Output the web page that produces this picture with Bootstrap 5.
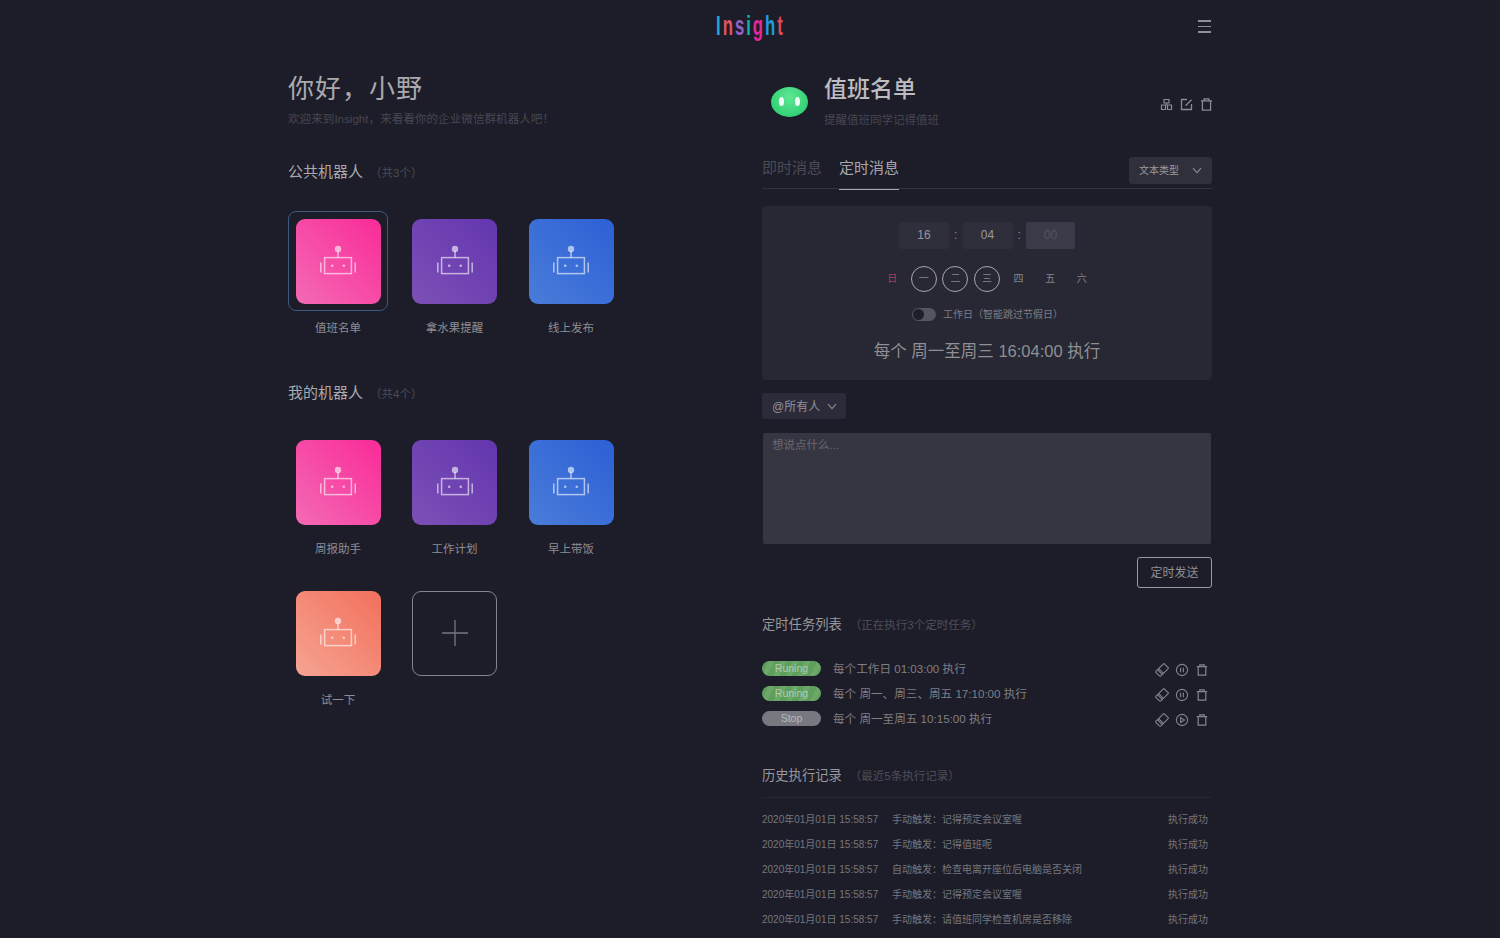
<!DOCTYPE html>
<html lang="zh-CN">
<head>
  <meta charset="UTF-8" />
  <meta name="viewport" content="width=device-width, initial-scale=1.0"/>
  <title>Insight</title>
  <link href="https://cdn.jsdelivr.net/npm/bootstrap@5.3.0/dist/css/bootstrap.min.css" rel="stylesheet">
  <style>
    html, body { height: 938px; overflow: hidden; }
    body {
      background: #1d1d29;
      color: #a6a6ab;
      font-family: "Liberation Sans", "Noto Sans CJK SC", sans-serif;
      font-size: 12px;
    }
    .wrap { width: 924px; margin: 0 auto; position: relative; }
    .topbar { height: 54px; }
    .logo { display: inline-block; font-size: 27px; line-height: 52px; letter-spacing: 3.2px; transform: scaleX(.62); font-weight: 700; }
    .menu-btn { position: absolute; right: 1px; top: 20px; width: 13px; }
    .menu-btn i { display: block; height: 1.5px; background: #8f8f94; margin-bottom: 4.2px; }
    .left-col { width: 474px; }
    .right-col { width: 450px; }
    .hello { font-size: 26px; line-height: 36px; letter-spacing: 1px; margin-top: 17px; color: #a9a9ae; }
    .sub-hello { font-size: 11.6px; line-height: 16px; margin-top: 4px; color: #474752; }
    .sec-title { font-size: 15px; line-height: 20px; color: #a9a9ae; }
    .sec-note { font-size: 11.5px; color: #4c4c57; margin-left: 7px; }
    .sec-one { margin-top: 35px; }
    .sec-two { margin-top: 21px; }
    .bot-grid { display: grid; grid-template-columns: repeat(3, 100px); column-gap: 16.5px; margin-top: 28px; }
    .bot-item { text-align: center; height: 151px; }
    .bot-face { width: 100px; height: 100px; padding: 7.5px; border: 1px solid transparent; border-radius: 8px; }
    .bot-face.picked { border-color: #3a5a80; }
    .bot-tile { width: 85px; height: 85px; margin-top: -.5px; margin-left: -1px; border-radius: 9px; display: flex; align-items: center; justify-content: center; }
    .bot-tile svg { width: 36px; height: 32px; margin-top: -1px; color: rgba(255,255,255,.6); }
    .bot-pink { background: linear-gradient(45deg, #f46ab4, #f92b98); }
    .bot-purple { background: linear-gradient(45deg, #7d4fb6, #6336af); }
    .bot-blue { background: linear-gradient(45deg, #4a7cd9, #2c60d5); }
    .bot-orange { background: linear-gradient(45deg, #f6a392, #f2705c); }
    .bot-add { border: 1px solid #85858c; background: transparent; }
    .bot-add svg { width: 26px; height: 26px; color: #77777d; }
    .bot-name { font-size: 11.5px; line-height: 17px; margin-top: 9px; color: #8d8d93; }

    .bot-head { height: 70px; margin-top: 13px; }
    .blob { width: 37px; height: 30px; margin: 0 16px 0 9px; border-radius: 50% / 50%; background: radial-gradient(circle at 50% 35%, #5fe793, #30d175 75%, #2cb96a); position: relative; flex: none; }
    .blob::before, .blob::after { content: ""; position: absolute; top: 10px; width: 5px; height: 9px; border-radius: 50%; background: #f0fff5; }
    .blob::before { left: 8px; }
    .blob::after { right: 8px; }
    .bot-title { font-size: 23px; line-height: 34px; margin-top: 5px; color: #bdbdc1; font-weight: 500; }
    .bot-desc { font-size: 11.5px; line-height: 16px; color: #464651; margin-top: 6px; }
    .head-icons { gap: 5px; margin-top: 5px; margin-right: -2px; }
    .head-icons svg { width: 15px; height: 15px; color: #8b8b90; }
    .tab-row { height: 49px; margin-top: 3px; border-bottom: 1px solid #33333f; }
    .tab-item { font-size: 15px; line-height: 20px; padding-top: 18px; height: 50px; width: 60px; color: #4b4b55; }
    .tab-item.on { color: #a8a8ac; border-bottom: 1.5px solid #a8a8ac; margin-left: 17px; }
    .type-btn { width: 83px; height: 27px; background: #30303d; border-radius: 3px; color: #9a9a9f; font-size: 10px; padding: 0 10px; margin-top: 17px; margin-left: auto; }
    .type-btn svg, .at-btn svg { width: 10px; height: 7px; color: #8b8b90; }
    .plan-panel { height: 174px; margin-top: 17px; background: #272833; border-radius: 4px; padding-top: 16px; text-align: center; }
    .time-row { height: 27px; gap: 0; justify-content: center; }
    .time-box { width: 50px; height: 27px; line-height: 27px; background: #2f2f3c; border-radius: 2px; font-size: 12px; color: #97979c; }
    .time-box.off { background: #3a3a48; color: #55555f; width: 49px; }
    .time-sep { width: 13.5px; line-height: 27px; color: #8f8f95; }
    .day-row { margin-top: 17px; height: 26px; justify-content: center; padding-left: 0; }
    .day-cell { width: 26px; height: 26px; line-height: 24px; margin: 0 2.8px; font-size: 10px; color: #85858b; border: 1px solid transparent; border-radius: 50%; }
    .day-cell.on { border: 1.5px solid #a7a7ab; }
    .day-cell.sun { color: #a83f55; }
    .switch-row { margin-top: 15px; height: 14px; justify-content: center; gap: 7px; font-size: 10px; color: #7e7e84; padding-left: 1px; }
    .toggle-pill { width: 24px; height: 13px; border-radius: 7px; background: #55555f; position: relative; }
    .toggle-pill::before { content: ""; position: absolute; left: 1px; top: 1px; width: 11px; height: 11px; border-radius: 50%; background: #1f1f2a; }
    .plan-text { font-size: 16.5px; line-height: 24px; margin-top: 18px; color: #8f8f94; }
    .at-btn { width: 84px; height: 26px; margin-top: 13px; background: #2b2b39; border-radius: 3px; color: #93939a; font-size: 12px; padding: 1px 0 0 10px; gap: 7px; white-space: nowrap; }
    .msg-box { display: block; width: 448px; height: 111px; margin: 14px 0 0 1px; background: #363643; border: 0; border-radius: 2px; padding: 4px 9px; font-size: 11.5px; line-height: 16px; color: #a6a6ab; resize: none; outline: none; }
    .msg-box::placeholder { color: #696971; }
    .send-btn { display: block; width: 75px; height: 31px; margin: 13px 0 0 auto; padding: 0; background: transparent; border: 1px solid #9a9a9f; border-radius: 3px; color: #8f8f94; font-size: 12px; }
    .list-title { font-size: 13.3px; line-height: 20px; color: #96969b; }
    .list-note { font-size: 11.5px; color: #4e4e58; margin-left: 8px; }
    .task-head { margin-top: 27px; padding-bottom: 21px; }
    .task-row { height: 25px; font-size: 11.6px; color: #7f7f85; }
    .task-chip { width: 59px; height: 15px; line-height: 15px; border-radius: 8px; text-align: center; font-size: 10.5px; margin-right: 12px; color: #b4c9b2; background: repeating-linear-gradient(115deg, #5f9f5c 0 6px, #6ca869 6px 11px); }
    .task-chip.halt { background: #787880; color: #b9b9bd; }
    .task-tools { margin-left: auto; gap: 6px; margin-right: 3px; margin-top: 3px; }
    .task-tools svg { width: 14px; height: 14px; color: #84848a; }
    .hist-head { margin-top: 35px; padding-bottom: 11px; border-bottom: 1px solid #272732; margin-bottom: 9px; }
    .hist-row { height: 25px; font-size: 10px; color: #76767c; }
    .hist-date { width: 130px; }
    .hist-state { margin-left: auto; margin-right: 4px; }
    .logo-a { color: #21a6dc; } .logo-b { color: #df5560; } .logo-c { color: #8d62c2; }
    .logo-d { color: #12aeb0; } .logo-e { color: #e2289d; } .logo-f { color: #1f9be0; } .logo-g { color: #df4a62; }
  </style>
</head>
<body>
  <svg width="0" height="0" class="d-block">
    <symbol id="i-bot" viewBox="0 0 36 32">
      <g fill="none" stroke="currentColor" stroke-width="1.5">
        <rect x="4.6" y="12.6" width="26.8" height="16"/>
        <path d="M18 6v6.5M.8 17.5v10M35.2 17.5v10"/>
      </g>
      <circle cx="18" cy="4" r="3.2" fill="currentColor"/>
      <circle cx="12.2" cy="20.8" r="1.3" fill="currentColor"/>
      <circle cx="23.8" cy="20.8" r="1.3" fill="currentColor"/>
    </symbol>
    <symbol id="i-trash" viewBox="0 0 14 14">
      <path d="M3.2 4v8.2h7.6V4M1.8 3.6h10.4M4.8 3.4V1.8h4.4v1.6" fill="none" stroke="currentColor" stroke-width="1.2"/>
    </symbol>
    <symbol id="i-tag" viewBox="0 0 14 14">
      <g transform="rotate(-45 7 7)" fill="none" stroke="currentColor" stroke-width="1.1">
        <rect x="1" y="3.6" width="12" height="6.8" rx="1"/>
        <path d="M4 3.6v6.8M5.6 3.6v6.8"/>
      </g>
    </symbol>
    <symbol id="i-pause" viewBox="0 0 14 14">
      <circle cx="7" cy="7" r="5.6" fill="none" stroke="currentColor" stroke-width="1.1"/>
      <path d="M5.6 4.8v4.4M8.4 4.8v4.4" stroke="currentColor" stroke-width="1.1"/>
    </symbol>
    <symbol id="i-play" viewBox="0 0 14 14">
      <circle cx="7" cy="7" r="5.6" fill="none" stroke="currentColor" stroke-width="1.1"/>
      <path d="M5.6 4.6 9.4 7l-3.8 2.4z" fill="none" stroke="currentColor" stroke-width="1.1"/>
    </symbol>
    <symbol id="i-down" viewBox="0 0 10 7">
      <path d="M1 1.2 5 5.6l4-4.4" fill="none" stroke="currentColor" stroke-width="1.1"/>
    </symbol>
  </svg>

  <div class="wrap">
    <div class="topbar text-center">
      <div class="logo"><span class="logo-a">I</span><span class="logo-b">n</span><span class="logo-c">s</span><span class="logo-d">i</span><span class="logo-e">g</span><span class="logo-f">h</span><span class="logo-g">t</span></div>
      <div class="menu-btn"><i></i><i></i><i></i></div>
    </div>

    <div class="d-flex">
      <div class="left-col">
        <div class="hello">你好，小野</div>
        <div class="sub-hello">欢迎来到Insight，来看看你的企业微信群机器人吧！</div>

        <div class="sec-title sec-one">公共机器人<span class="sec-note">（共3个）</span></div>
        <div class="bot-grid">
          <div class="bot-item">
            <div class="bot-face picked"><div class="bot-tile bot-pink"><svg><use href="#i-bot"/></svg></div></div>
            <div class="bot-name">值班名单</div>
          </div>
          <div class="bot-item">
            <div class="bot-face"><div class="bot-tile bot-purple"><svg><use href="#i-bot"/></svg></div></div>
            <div class="bot-name">拿水果提醒</div>
          </div>
          <div class="bot-item">
            <div class="bot-face"><div class="bot-tile bot-blue"><svg><use href="#i-bot"/></svg></div></div>
            <div class="bot-name">线上发布</div>
          </div>
        </div>

        <div class="sec-title sec-two">我的机器人<span class="sec-note">（共4个）</span></div>
        <div class="bot-grid">
          <div class="bot-item">
            <div class="bot-face"><div class="bot-tile bot-pink"><svg><use href="#i-bot"/></svg></div></div>
            <div class="bot-name">周报助手</div>
          </div>
          <div class="bot-item">
            <div class="bot-face"><div class="bot-tile bot-purple"><svg><use href="#i-bot"/></svg></div></div>
            <div class="bot-name">工作计划</div>
          </div>
          <div class="bot-item">
            <div class="bot-face"><div class="bot-tile bot-blue"><svg><use href="#i-bot"/></svg></div></div>
            <div class="bot-name">早上带饭</div>
          </div>
          <div class="bot-item">
            <div class="bot-face"><div class="bot-tile bot-orange"><svg><use href="#i-bot"/></svg></div></div>
            <div class="bot-name">试一下</div>
          </div>
          <div class="bot-item">
            <div class="bot-face"><div class="bot-tile bot-add"><svg viewBox="0 0 26 26"><path d="M13 0v26M0 13h26" stroke="currentColor" stroke-width="1.3"/></svg></div></div>
          </div>
        </div>
      </div>

      <div class="right-col">
        <div class="bot-head d-flex">
          <div class="d-flex align-items-center"><div class="blob"></div></div>
          <div>
            <div class="bot-title">值班名单</div>
            <div class="bot-desc">提醒值班同学记得值班</div>
          </div>
          <div class="head-icons d-flex align-items-center ms-auto">
            <svg viewBox="0 0 15 15"><path d="M5 2.5h5v3.5H5zM2.5 8h4v4.5h-4zM8.5 8h4v4.5h-4zM7.5 6v2" fill="none" stroke="currentColor" stroke-width="1.2"/></svg>
            <svg viewBox="0 0 15 15"><path d="M8 2.5H2.5v10h10V7M6.5 8.8l6-6" fill="none" stroke="currentColor" stroke-width="1.3"/></svg>
            <svg><use href="#i-trash"/></svg>
          </div>
        </div>

        <div class="tab-row d-flex">
          <div class="tab-item">即时消息</div>
          <div class="tab-item on">定时消息</div>
          <div class="type-btn d-flex align-items-center justify-content-between"><span>文本类型</span><svg><use href="#i-down"/></svg></div>
        </div>

        <div class="plan-panel">
          <div class="time-row d-flex">
            <div class="time-box">16</div><div class="time-sep">:</div><div class="time-box">04</div><div class="time-sep">:</div><div class="time-box off">00</div>
          </div>
          <div class="day-row d-flex">
            <div class="day-cell sun">日</div><div class="day-cell on">一</div><div class="day-cell on">二</div><div class="day-cell on">三</div><div class="day-cell">四</div><div class="day-cell">五</div><div class="day-cell">六</div>
          </div>
          <div class="switch-row d-flex align-items-center">
            <div class="toggle-pill"></div><span>工作日（智能跳过节假日）</span>
          </div>
          <div class="plan-text">每个 周一至周三 16:04:00 执行</div>
        </div>

        <div class="at-btn d-flex align-items-center"><span>@所有人</span><svg><use href="#i-down"/></svg></div>
        <textarea class="msg-box" placeholder="想说点什么..."></textarea>
        <button class="send-btn" type="button">定时发送</button>

        <div class="list-title task-head">定时任务列表<span class="list-note">（正在执行3个定时任务）</span></div>
        <div class="task-row d-flex align-items-center">
          <div class="task-chip">Runing</div><span>每个工作日 01:03:00 执行</span>
          <div class="task-tools d-flex"><svg><use href="#i-tag"/></svg><svg><use href="#i-pause"/></svg><svg><use href="#i-trash"/></svg></div>
        </div>
        <div class="task-row d-flex align-items-center">
          <div class="task-chip">Runing</div><span>每个 周一、周三、周五 17:10:00 执行</span>
          <div class="task-tools d-flex"><svg><use href="#i-tag"/></svg><svg><use href="#i-pause"/></svg><svg><use href="#i-trash"/></svg></div>
        </div>
        <div class="task-row d-flex align-items-center">
          <div class="task-chip halt">Stop</div><span>每个 周一至周五 10:15:00 执行</span>
          <div class="task-tools d-flex"><svg><use href="#i-tag"/></svg><svg><use href="#i-play"/></svg><svg><use href="#i-trash"/></svg></div>
        </div>

        <div class="list-title hist-head">历史执行记录<span class="list-note">（最近5条执行记录）</span></div>
        <div class="hist-row d-flex align-items-center"><span class="hist-date">2020年01月01日 15:58:57</span><span>手动触发：记得预定会议室喔</span><span class="hist-state">执行成功</span></div>
        <div class="hist-row d-flex align-items-center"><span class="hist-date">2020年01月01日 15:58:57</span><span>手动触发：记得值班呢</span><span class="hist-state">执行成功</span></div>
        <div class="hist-row d-flex align-items-center"><span class="hist-date">2020年01月01日 15:58:57</span><span>自动触发：检查电离开座位后电脑是否关闭</span><span class="hist-state">执行成功</span></div>
        <div class="hist-row d-flex align-items-center"><span class="hist-date">2020年01月01日 15:58:57</span><span>手动触发：记得预定会议室喔</span><span class="hist-state">执行成功</span></div>
        <div class="hist-row d-flex align-items-center"><span class="hist-date">2020年01月01日 15:58:57</span><span>手动触发：请值班同学检查机房是否移除</span><span class="hist-state">执行成功</span></div>
      </div>
    </div>
  </div>

  <script src="https://cdn.jsdelivr.net/npm/bootstrap@5.3.0/dist/js/bootstrap.bundle.min.js"></script>
</body>
</html>
